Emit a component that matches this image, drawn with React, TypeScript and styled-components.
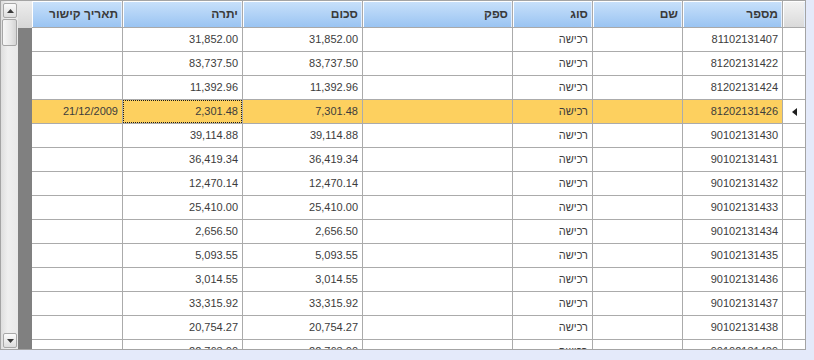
import React from 'react'
import styled, { createGlobalStyle } from 'styled-components'

const rows = [
  { id: '81102131407', sum: '31,852.00', balance: '31,852.00' },
  { id: '81202131422', sum: '83,737.50', balance: '83,737.50' },
  { id: '81202131424', sum: '11,392.96', balance: '11,392.96' },
  { id: '81202131426', sum: '7,301.48', balance: '2,301.48', date: '21/12/2009', selected: true },
  { id: '90102131430', sum: '39,114.88', balance: '39,114.88' },
  { id: '90102131431', sum: '36,419.34', balance: '36,419.34' },
  { id: '90102131432', sum: '12,470.14', balance: '12,470.14' },
  { id: '90102131433', sum: '25,410.00', balance: '25,410.00' },
  { id: '90102131434', sum: '2,656.50', balance: '2,656.50' },
  { id: '90102131435', sum: '5,093.55', balance: '5,093.55' },
  { id: '90102131436', sum: '3,014.55', balance: '3,014.55' },
  { id: '90102131437', sum: '33,315.92', balance: '33,315.92' },
  { id: '90102131438', sum: '20,754.27', balance: '20,754.27' },
  { id: '90102131439', sum: '22,763.00', balance: '22,763.00' },
]

const headers = ['מספר', 'שם', 'סוג', 'ספק', 'סכום', 'יתרה', 'תאריך קישור']

const GlobalStyle = createGlobalStyle`
  body {
    margin: 0;
    background: #e4eafa;
    font-family: Tahoma, "Liberation Sans", "DejaVu Sans", sans-serif;
    font-size: 11px;
  }
`

const Frame = styled.div`
  width: 806px;
  height: 350px;
  box-sizing: border-box;
  border: 1px solid #a4a4a4;
  display: flex;
  direction: rtl;
  background: #fff;
  overflow: hidden;
`

const Table = styled.div`
  width: 773px;
  display: grid;
  grid-template-columns: 23px 100px 90px 80px 150px 120px 120px 90px;
  grid-template-rows: 27px;
  grid-auto-rows: 24px;
  align-content: start;
  overflow: hidden;
`

const HeadCell = styled.div<{ $corner?: boolean; $last?: boolean }>`
  box-sizing: border-box;
  border-left: ${({ $last }) => ($last ? 'none' : '1px solid #a9a9a9')};
  border-bottom: 1px solid #a9a9a9;
  box-shadow: inset 1px 1px 0 #ffffff, inset -1px 0 0 #e4eefb;
  background: ${({ $corner }) =>
    $corner
      ? 'linear-gradient(#f3f3f3, #dadada)'
      : 'linear-gradient(#c9e1fb, #9ac4f2)'};
  color: #3a3a3a;
  font-size: 12px;
  font-weight: bold;
  line-height: 26px;
  padding: 0 4px;
  white-space: nowrap;
`

const Cell = styled.div<{ $selected?: boolean; $focused?: boolean; $last?: boolean; $num?: boolean }>`
  position: relative;
  box-sizing: border-box;
  border-left: ${({ $last }) => ($last ? 'none' : '1px solid #ababab')};
  border-bottom: 1px solid #ababab;
  background: ${({ $selected }) => ($selected ? '#fdd05f' : '#ffffff')};
  color: #3c3c3c;
  line-height: 23px;
  padding: 0 4px;
  white-space: nowrap;
  overflow: hidden;
  direction: ${({ $num }) => ($num ? 'ltr' : 'rtl')};
  text-align: right;

  ${({ $focused }) =>
    $focused &&
    `&::after {
      content: '';
      position: absolute;
      inset: 0;
      border: 1px dotted #1a1a1a;
    }`}
`

const RowHead = styled.div`
  box-sizing: border-box;
  border-left: 1px solid #ababab;
  border-bottom: 1px solid #ababab;
  background: #fff;
  display: flex;
  align-items: center;
  justify-content: center;
`

const Filler = styled.div`
  width: 14px;
  display: flex;
  flex-direction: column;

  &::before {
    content: '';
    height: 27px;
    background: linear-gradient(#ededed, #d6d6d6);
  }

  &::after {
    content: '';
    flex: 1;
    background: #808080;
  }
`

const ScrollBar = styled.div`
  width: 17px;
  direction: ltr;
  display: flex;
  flex-direction: column;
  align-items: flex-start;
  padding-left: 2px;
  box-sizing: border-box;
  background: linear-gradient(to right, #dedede, #efefef 40%, #e8e8e8);
`

const ScrollButton = styled.div<{ $down?: boolean }>`
  width: 14px;
  height: 15px;
  box-sizing: border-box;
  margin: ${({ $down }) => ($down ? 'auto 0 1px' : '2px 0 0')};
  border: 1px solid #a8a8a8;
  border-radius: 2px;
  background: linear-gradient(#fbfbfb, #dddddd);
  display: flex;
  align-items: center;
  justify-content: center;
`

const Thumb = styled.div`
  width: 15px;
  height: 27px;
  margin: 1px 0 0 -1px;
  box-sizing: border-box;
  border: 1px solid #a6a6a6;
  border-radius: 2px;
  background: linear-gradient(to right, #f7f7f7, #e6e6e6 60%, #d4d4d4);
`

function Arrow({ down }: { down?: boolean }) {
  return (
    <svg width="7" height="4" viewBox="0 0 7 4">
      <path d={down ? 'M0 0H7L3.5 4Z' : 'M3.5 0L7 4H0Z'} fill="#3a3a3a" />
    </svg>
  )
}

function Pointer() {
  return (
    <svg width="5" height="8" viewBox="0 0 5 8">
      <path d="M0 4L5 0V8Z" fill="#1e1e1e" />
    </svg>
  )
}

function App() {
  return (
    <>
      <GlobalStyle />
      <Frame>
        <Table>
          <HeadCell $corner />
          {headers.map((h, i) => (
            <HeadCell key={h} $last={i === headers.length - 1}>
              {h}
            </HeadCell>
          ))}
          {rows.map((r) => (
            <React.Fragment key={r.id}>
              <RowHead>{r.selected && <Pointer />}</RowHead>
              <Cell $selected={r.selected} $num>{r.id}</Cell>
              <Cell $selected={r.selected} />
              <Cell $selected={r.selected}>רכישה</Cell>
              <Cell $selected={r.selected} />
              <Cell $selected={r.selected} $num>{r.sum}</Cell>
              <Cell $selected={r.selected} $focused={r.selected} $num>
                {r.balance}
              </Cell>
              <Cell $selected={r.selected} $last $num>
                {r.date}
              </Cell>
            </React.Fragment>
          ))}
        </Table>
        <Filler />
        <ScrollBar>
          <ScrollButton>
            <Arrow />
          </ScrollButton>
          <Thumb />
          <ScrollButton $down>
            <Arrow down />
          </ScrollButton>
        </ScrollBar>
      </Frame>
    </>
  )
}

export default App
